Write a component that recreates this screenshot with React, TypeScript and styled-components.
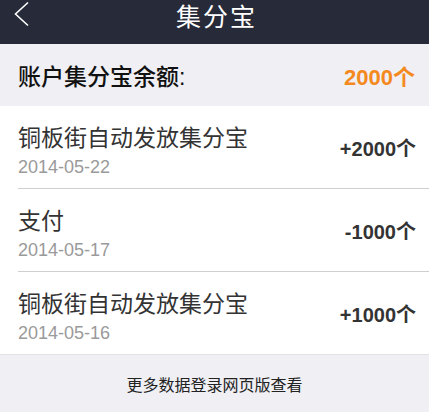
import styled, { createGlobalStyle } from "styled-components";

const GlobalStyle = createGlobalStyle`
  html, body {
    margin: 0;
    padding: 0;
    background: #ffffff;
  }
  body {
    font-family: "Liberation Sans", "Noto Sans CJK SC", sans-serif;
  }
`;

type Record = {
  title: string;
  date: string;
  amount: string;
};

const RECORDS: Record[] = [
  { title: "铜板街自动发放集分宝", date: "2014-05-22", amount: "+2000个" },
  { title: "支付", date: "2014-05-17", amount: "-1000个" },
  { title: "铜板街自动发放集分宝", date: "2014-05-16", amount: "+1000个" },
];

function App() {
  return (
    <Page>
      <GlobalStyle />
      <NavBar>
        <BackButton aria-label="返回">
          <svg width="16" height="26" viewBox="0 0 16 26">
            <polyline
              points="14,1.5 1.5,13 14,24.5"
              fill="none"
              stroke="#ffffff"
              strokeWidth="1.6"
            />
          </svg>
        </BackButton>
        <NavTitle>集分宝</NavTitle>
      </NavBar>

      <Balance>
        <BalanceLabel>账户集分宝余额:</BalanceLabel>
        <BalanceValue>2000个</BalanceValue>
      </Balance>

      <List>
        {RECORDS.map((item, i) => (
          <Row key={i}>
            <RowInfo>
              <RowTitle>{item.title}</RowTitle>
              <RowDate>{item.date}</RowDate>
            </RowInfo>
            <RowAmount>{item.amount}</RowAmount>
          </Row>
        ))}
      </List>

      <Footer>更多数据登录网页版查看</Footer>
    </Page>
  );
}

const Page = styled.div`
  width: 429px;
  background: #ffffff;
`;

const NavBar = styled.header`
  position: relative;
  display: flex;
  align-items: center;
  justify-content: center;
  height: 44px;
  background: #272a38;
`;

const BackButton = styled.div`
  position: absolute;
  left: 14px;
  top: 1px;
  display: flex;
`;

const NavTitle = styled.h1`
  margin: -14px 0 0 4px;
  font-size: 25px;
  font-weight: 400;
  letter-spacing: 2px;
  color: #ffffff;
`;

const Balance = styled.section`
  display: flex;
  align-items: center;
  justify-content: space-between;
  height: 62px;
  padding: 0 14px 0 18px;
  background: #efeff4;
`;

const BalanceLabel = styled.span`
  font-size: 23px;
  font-weight: 500;
  color: #111111;
`;

const BalanceValue = styled.span`
  font-size: 22px;
  font-weight: 700;
  color: #f4891e;
`;

const List = styled.ul`
  margin: 0;
  padding: 0 0 0 18px;
  list-style: none;
`;

const Row = styled.li`
  display: flex;
  align-items: center;
  justify-content: space-between;
  height: 82px;
  padding-right: 13px;
  border-bottom: 1px solid #cfcfd2;

  &:last-child {
    border-bottom: none;
  }
`;

const RowInfo = styled.div`
  display: flex;
  flex-direction: column;
  gap: 6px;
  padding-top: 10px;
`;

const RowTitle = styled.span`
  font-size: 23px;
  line-height: 24px;
  color: #333333;
`;

const RowDate = styled.span`
  font-size: 18px;
  line-height: 22px;
  color: #9a9a9a;
`;

const RowAmount = styled.span`
  font-size: 20px;
  font-weight: 700;
  color: #333333;
`;

const Footer = styled.footer`
  display: flex;
  align-items: center;
  justify-content: center;
  height: 57px;
  border-top: 1px solid #e2e2e6;
  background: #efeff4;
  font-size: 16px;
  color: #222222;
`;

export default App;
